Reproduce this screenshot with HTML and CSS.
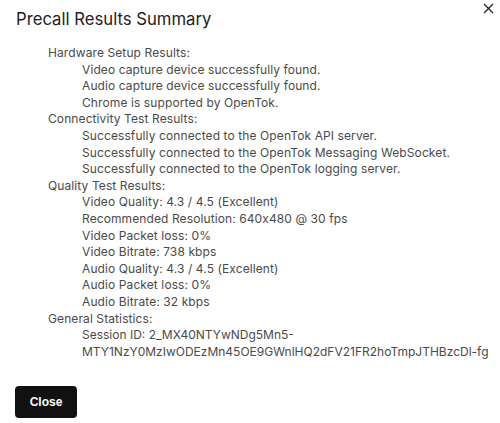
FILE: index.html
```html
<!DOCTYPE html>
<html lang="en">
    <head>
        <meta charset="UTF-8">
        <meta name="viewport" content="width=device-width, initial-scale=1.0">
        <title>Precall Results Summary</title>
        <link rel="stylesheet" href="styles.css">
    </head>
    <body>
        <div class="dialogo">
            <div class="cabecalho">
                <h1 class="titulo">Precall Results Summary</h1>
                <button class="fechar" type="button" aria-label="Close">
                    <svg width="11" height="11" viewBox="0 0 11 11">
                        <path d="M1 1 L10 10 M10 1 L1 10" stroke="#222" stroke-width="1.3" fill="none"/>
                    </svg>
                </button>
            </div>

            <div class="resultados">
                <div class="secao">Hardware Setup Results:</div>
                <div class="item">Video capture device successfully found.</div>
                <div class="item">Audio capture device successfully found.</div>
                <div class="item">Chrome is supported by OpenTok.</div>

                <div class="secao">Connectivity Test Results:</div>
                <div class="item">Successfully connected to the OpenTok API server.</div>
                <div class="item">Successfully connected to the OpenTok Messaging WebSocket.</div>
                <div class="item">Successfully connected to the OpenTok logging server.</div>

                <div class="secao">Quality Test Results:</div>
                <div class="item">Video Quality: 4.3 / 4.5 (Excellent)</div>
                <div class="item">Recommended Resolution: 640x480 @ 30 fps</div>
                <div class="item">Video Packet loss: 0%</div>
                <div class="item">Video Bitrate: 738 kbps</div>
                <div class="item">Audio Quality: 4.3 / 4.5 (Excellent)</div>
                <div class="item">Audio Packet loss: 0%</div>
                <div class="item">Audio Bitrate: 32 kbps</div>

                <div class="secao">General Statistics:</div>
                <div class="item sessao">Session ID: 2_MX40NTYwNDg5Mn5-MTY1NzY0MzIwODEzMn45OE9GWnlHQ2dFV21FR2hoTmpJTHBzcDl-fg</div>
            </div>

            <div class="rodape">
                <button class="button" type="button">Close</button>
            </div>
        </div>
    </body>
</html>
```

FILE: styles.css
```css
*{
    margin: 0;
    padding: 0;
    box-sizing: border-box;
}
body{
    background-color: #fff;
    font-family: Inter, 'Noto Sans', sans-serif;
    color: #4a4a4a;
}
.dialogo{
    width: 500px;
    height: 423px;
    padding: 0 16px;
}
.cabecalho{
    display: flex;
    justify-content: space-between;
    align-items: flex-start;
    height: 45px;
}
.titulo{
    margin-top: 9px;
    font-size: 16.7px;
    font-weight: 400;
    color: #222;
}
.fechar{
    background: none;
    border: none;
    margin-top: 3px;
    margin-right: -10px;
    width: 11px;
    height: 11px;
    display: flex;
}
.resultados{
    padding-left: 32px;
    font-size: 12px;
    letter-spacing: 0.1px;
    line-height: 16.6px;
}
.item{
    padding-left: 34px;
}
.sessao{
    margin-right: -16px;
    letter-spacing: 0;
}
.rodape{
    margin-top: 26px;
}
.button{
    background-color: #111;
    border-radius: 4px;
    border: none;
    color: white;
    width: 62px;
    height: 32px;
    margin-left: -1px;
    font-family: 'Liberation Sans', Arial, sans-serif;
    font-weight: bold;
    font-size: 12px;
}
```
